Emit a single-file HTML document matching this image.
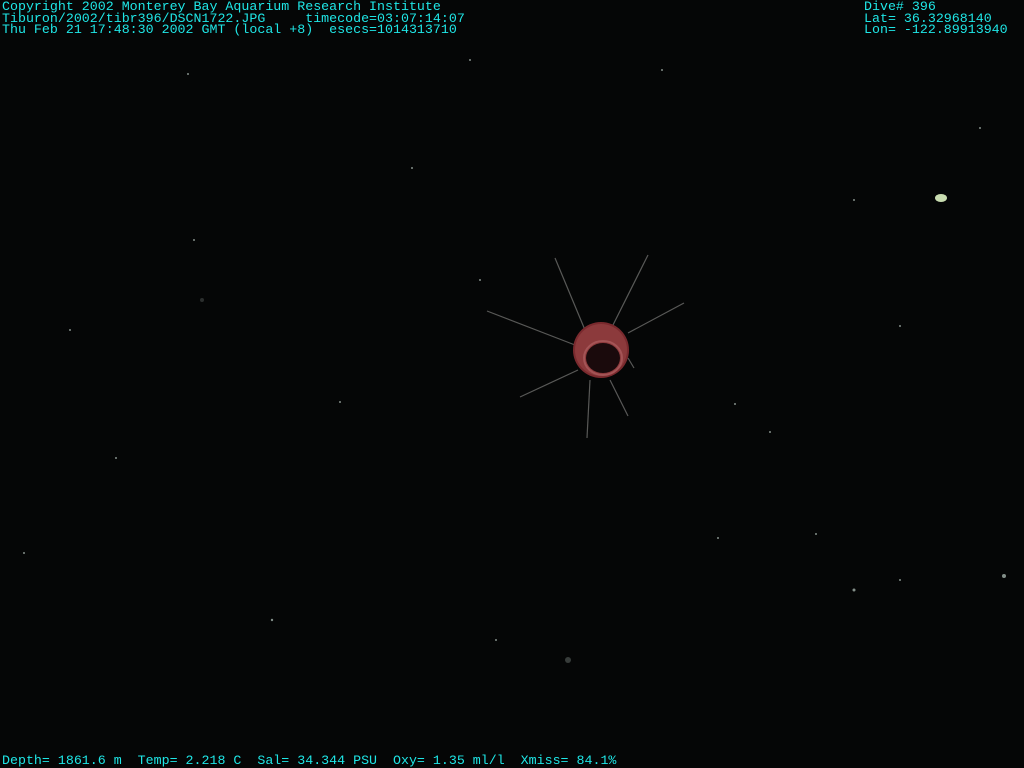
<!DOCTYPE html>
<html><head><style>
html,body{margin:0;padding:0;background:#050606;width:1024px;height:768px;overflow:hidden;position:relative}
.t{position:absolute;font-family:"Liberation Mono",monospace;font-size:13.3px;line-height:11.7px;color:#1fe6e6;white-space:pre}
</style></head><body>
<svg width="1024" height="768" style="position:absolute;left:0;top:0">
<g fill="#b8c8c0" opacity="0.7">
<circle cx="188" cy="74" r="1"/><circle cx="662" cy="70" r="1"/><circle cx="412" cy="168" r="1"/><circle cx="194" cy="240" r="1"/>
<circle cx="854" cy="200" r="1"/><circle cx="900" cy="326" r="1"/><circle cx="272" cy="620" r="1.2"/><circle cx="854" cy="590" r="1.5"/>
<circle cx="568" cy="660" r="3" opacity="0.4"/><circle cx="1004" cy="576" r="2"/><circle cx="116" cy="458" r="1"/><circle cx="70" cy="330" r="1"/>
<circle cx="770" cy="432" r="1"/><circle cx="480" cy="280" r="1"/><circle cx="340" cy="402" r="1"/><circle cx="900" cy="580" r="1"/>
<circle cx="470" cy="60" r="1"/><circle cx="24" cy="553" r="1"/><circle cx="718" cy="538" r="1"/><circle cx="735" cy="404" r="1"/>
<circle cx="980" cy="128" r="1"/><circle cx="202" cy="300" r="2" opacity="0.3"/><circle cx="816" cy="534" r="1"/><circle cx="496" cy="640" r="1"/>
</g>
<ellipse cx="941" cy="198" rx="6" ry="4" fill="#c8dcb0"/>
<g stroke="#6e6e6c" stroke-width="1.2" fill="none" opacity="0.8">
<line x1="585" y1="330" x2="555" y2="258"/><line x1="612" y1="327" x2="648" y2="255"/>
<line x1="575" y1="345" x2="487" y2="311"/><line x1="628" y1="333" x2="684" y2="303"/>
<line x1="578" y1="370" x2="520" y2="397"/><line x1="590" y1="380" x2="587" y2="438"/>
<line x1="610" y1="380" x2="628" y2="416"/><line x1="628" y1="358" x2="634" y2="368"/>
</g>
<circle cx="601" cy="350" r="28" fill="#7a2a2e"/>
<circle cx="601" cy="350" r="26" fill="#8c3a3c"/>
<ellipse cx="603" cy="358" rx="17" ry="15" fill="#1a0a0c"/>
<ellipse cx="603" cy="358" rx="19" ry="17" fill="none" stroke="#a45456" stroke-width="2"/>
</svg>
<div class="t" style="left:2px;top:1px">Copyright 2002 Monterey Bay Aquarium Research Institute
Tiburon/2002/tibr396/DSCN1722.JPG     timecode=03:07:14:07
Thu Feb 21 17:48:30 2002 GMT (local +8)  esecs=1014313710</div>
<div class="t" style="left:864px;top:1px">Dive# 396
Lat= 36.32968140
Lon= -122.89913940</div>
<div class="t" style="left:2px;top:755px">Depth= 1861.6 m  Temp= 2.218 C  Sal= 34.344 PSU  Oxy= 1.35 ml/l  Xmiss= 84.1%</div>
</body></html>
